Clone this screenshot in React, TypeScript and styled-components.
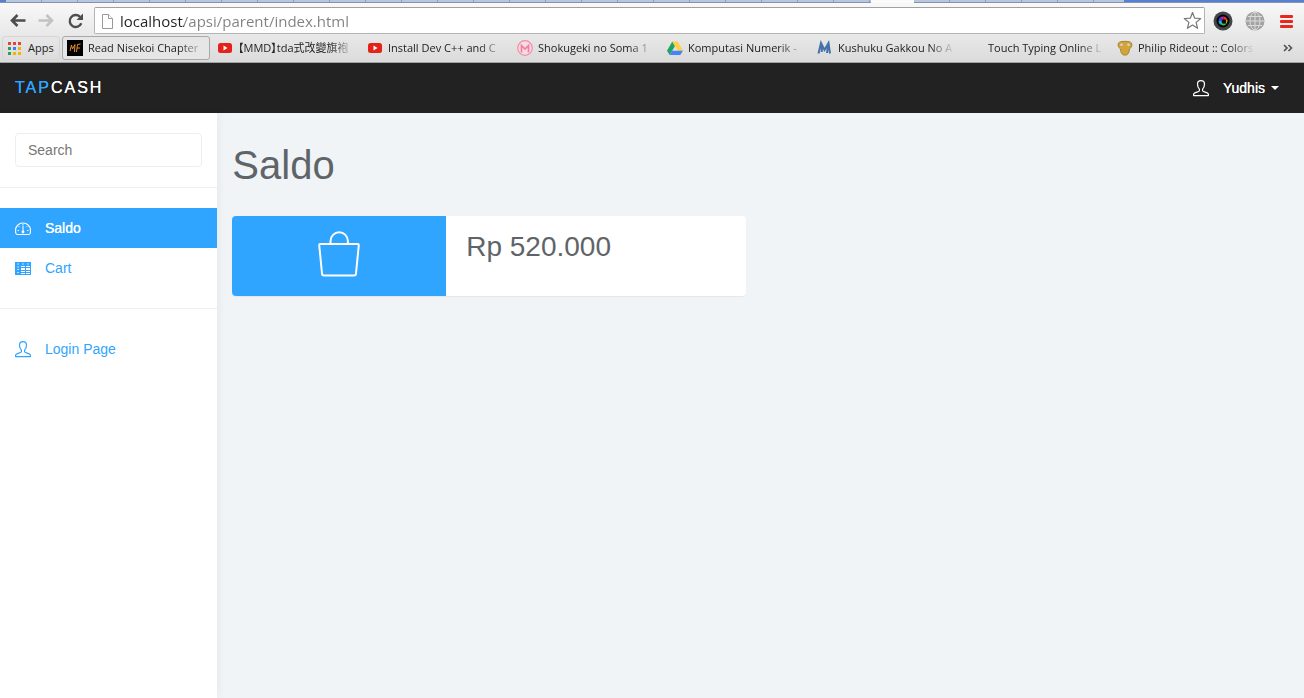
import React from "react";
import styled, { createGlobalStyle, css } from "styled-components";

const blue = "#30a5ff";
const sans = `"Liberation Sans", Arial, sans-serif`;
const chromeSans = `"Open Sans", "Noto Sans CJK TC", sans-serif`;

const GlobalStyle = createGlobalStyle`
  *, *::before, *::after { box-sizing: border-box; }
  body { margin: 0; background: #f1f4f7; color: #5f6468; font: 14px/20px ${sans}; }
  button, input { font: inherit; color: inherit; }
`;

const Page = styled.div`
  display: flex;
  flex-direction: column;
  min-height: 100vh;
`;

/* ---------- browser window ---------- */

const Chrome = styled.div`
  font: 12px/16px ${chromeSans};
  background: linear-gradient(#fafafa, #dcdcdc 60px);
  border-bottom: 1px solid #a3a3a3;
`;

const TabStrip = styled.div`
  display: flex;
  height: 3px;
  background: #5681d0;
  border-bottom: 1px solid #8593b3;
  padding-left: 6px;
`;

const TabGroup = styled.div<{ $span: number }>`
  flex: 0 1 ${(p) => p.$span}px;
  background: repeating-linear-gradient(90deg, #b9c7de 0 35px, #8e9ebb 35px 36px);
`;

const ActiveTab = styled.div`
  flex: 0 0 43px;
  height: 3px;
  background: #fafafa;
`;

const Toolbar = styled.div`
  display: flex;
  align-items: center;
  padding: 4px 7px 0 8px;
`;

const ToolButton = styled.button`
  display: grid;
  place-items: center;
  width: 20px;
  height: 20px;
  padding: 0;
  border: 0;
  background: none;
  flex: none;
  svg { display: block; }
`;

const NavButtons = styled.div`
  display: flex;
  gap: 9px;
  margin-right: 8px;
`;

const AddressBar = styled.form`
  display: flex;
  align-items: center;
  flex: 1;
  min-width: 0;
  height: 27px;
  padding: 0 2px 0 6px;
  background: #fff;
  border: 1px solid #b4b4b4;
  border-top-color: #a0a0a0;
  border-radius: 2px;
`;

const AddressInput = styled.input`
  flex: 1;
  min-width: 0;
  padding: 0;
  margin-left: 6px;
  border: 0;
  outline: 0;
  font-size: 15px;
  line-height: 24px;
  color: #808080;
  background: linear-gradient(90deg, #222 64px, #808080 64px);
  -webkit-background-clip: text;
  background-clip: text;
  -webkit-text-fill-color: transparent;
`;

const Extensions = styled.div`
  display: flex;
  gap: 12px;
  margin-left: 8px;
`;

const Bookmarks = styled.nav`
  display: flex;
  align-items: center;
  gap: 2px;
  height: 28px;
  padding: 0 6px 0 2px;
`;

const Bookmark = styled.a<{ $raised?: boolean; $faint?: boolean; $apps?: boolean }>`
  display: flex;
  align-items: center;
  gap: ${(p) => (p.$apps ? "6px" : "5px")};
  flex: 0 1 ${(p) => (p.$apps ? "58px" : "148px")};
  min-width: 0;
  height: 24px;
  padding: 0 4px;
  border: 1px solid transparent;
  border-radius: 3px;
  color: #222;
  text-decoration: none;
  svg { flex: none; }
  ${(p) => p.$faint && css`border-color: #d6d6d6;`}
  ${(p) => p.$raised && css`border-color: #a8a8a8; background: #e6e6e6;`}
`;

const BookmarkText = styled.span<{ $fade?: boolean }>`
  flex: 1;
  min-width: 0;
  overflow: hidden;
  white-space: nowrap;
  font-size: 11px;
  font-feature-settings: "palt";
  ${(p) =>
    p.$fade &&
    css`
      mask-image: linear-gradient(90deg, #000 calc(100% - 26px), transparent);
    `}
`;

const More = styled(ToolButton)`
  margin-left: auto;
`;

/* ---------- application ---------- */

const Header = styled.header`
  display: flex;
  align-items: center;
  justify-content: space-between;
  height: 50px;
  padding: 0 25px 0 15px;
  background: #222;
  color: #fff;
`;

const Brand = styled.a`
  font-size: 16px;
  letter-spacing: 2px;
  text-transform: uppercase;
  text-decoration: none;
  color: #fff;
  text-shadow: 0 0 0 currentColor;
  span { color: ${blue}; text-shadow: 0 0 0 currentColor; }
`;

const UserButton = styled.button`
  display: flex;
  align-items: center;
  padding: 0;
  border: 0;
  background: none;
  text-shadow: 0 0 0 #fff;
  svg { margin-right: 14px; }
`;

const Caret = styled.i`
  margin-left: 6px;
  border: 4px solid transparent;
  border-top-color: #fff;
  border-bottom: 0;
`;

const Body = styled.div`
  display: flex;
  flex: 1;
`;

const Sidebar = styled.aside`
  flex: none;
  width: calc(100% / 6);
  padding-top: 20px;
  background: #fff;
  box-shadow: 1px 0 10px rgba(0, 0, 0, 0.05);
`;

const SearchForm = styled.form`
  padding: 0 15px 20px;
  border-bottom: 1px solid #eee;
`;

const SearchInput = styled.input`
  display: block;
  width: 100%;
  height: 34px;
  padding: 6px 12px;
  border: 1px solid #eee;
  border-radius: 4px;
  background: #fff;
  &::placeholder { color: #777; opacity: 1; }
`;

const Menu = styled.ul`
  list-style: none;
  margin: 0;
  padding: 20px 0;
  & + & { border-top: 1px solid #eee; }
`;

const MenuLink = styled.a<{ $active?: boolean }>`
  display: flex;
  align-items: center;
  gap: 14px;
  height: 40px;
  padding: 0 15px;
  color: ${(p) => (p.$active ? "#fff" : blue)};
  background: ${(p) => (p.$active ? blue : "transparent")};
  text-shadow: ${(p) => (p.$active ? "0 0 0 #fff" : "none")};
  text-decoration: none;
`;

const Main = styled.main`
  flex: 1;
  min-width: 0;
  padding: 30px 15px;
`;

const Title = styled.h1`
  margin: 0 0 29px;
  font-size: 40px;
  line-height: 44px;
  font-weight: 400;
`;

const Cards = styled.section`
  display: grid;
  grid-template-columns: repeat(2, 1fr);
  gap: 30px;
`;

const Card = styled.article`
  display: grid;
  grid-template-columns: 5fr 7fr;
  min-height: 80px;
  border-radius: 4px;
  overflow: hidden;
  background: #fff;
  box-shadow: 0 1px 1px rgba(0, 0, 0, 0.05);
`;

const CardIcon = styled.div`
  display: flex;
  justify-content: center;
  align-items: flex-start;
  padding-top: 14px;
  background: ${blue};
`;

const Amount = styled.div`
  padding: 10px 20px;
  font-size: 28px;
  line-height: 42px;
`;

/* ---------- drawings ---------- */

const Arrow = ({ back }: { back?: boolean }) => (
  <svg width="18" height="16" viewBox="0 0 18 16" fill="none" stroke={back ? "#4d4d4d" : "#c2c2c2"} strokeWidth="2.600">
    {back ? <path d="M16.500 7.500H3M8.500 2 3 7.500l5.500 5.500" /> : <path d="M.500 7.500h13.500M8.500 2l5.500 5.500L8.500 13" />}
  </svg>
);

const Reload = () => (
  <svg width="18" height="18" viewBox="0 0 18 18">
    <path d="M14.300 11.300A6 6 0 1 1 13 4.800" fill="none" stroke="#4d4d4d" strokeWidth="2.400" />
    <path d="M16 1.500V8H9.500z" fill="#4d4d4d" />
  </svg>
);

const PageIcon = () => (
  <svg width="13" height="16" viewBox="0 0 13 16" fill="#fff" stroke="#999">
    <path d="M1.500 1.500h6l4 4v10h-10z" />
    <path d="M7.500 1.500v4h4" />
  </svg>
);

const Star = () => (
  <svg width="20" height="19" viewBox="0 0 20 19" fill="#fff" stroke="#777" strokeWidth="1.200" strokeLinejoin="round">
    <path d="m10.500 1.500 2.200 5.700 6 .300-4.600 3.900 1.500 5.900-5.100-3.300-5.100 3.300 1.500-5.900-4.600-3.900 6-.300z" />
  </svg>
);

const Lens = () => (
  <svg width="20" height="20" viewBox="0 0 20 20">
    <circle cx="10" cy="10" r="9.500" fill="#44464a" />
    <circle cx="10" cy="10" r="6.500" fill="#060608" />
    <path d="M10 10 7 6.500a5 5 0 0 1 4-1z" fill="#c21cc0" />
    <path d="m10 10 1-4.500a4.500 4.500 0 0 1 3.500 3.500z" fill="#f03a20" />
    <path d="m10 10 4.500-1a4.500 4.500 0 0 1-1.500 4z" fill="#e6d321" />
    <path d="m10 10 3 3.500a4.500 4.500 0 0 1-4.500.500z" fill="#35c73a" />
    <path d="m10 10-1.500 4A4.500 4.500 0 0 1 5.500 10z" fill="#18b7c6" />
    <path d="M10 10H5.500A4.500 4.500 0 0 1 7 6.500z" fill="#3848dd" />
    <circle cx="11" cy="10.500" r="2.300" fill="#0a0a10" />
  </svg>
);

const Globe = () => (
  <svg width="20" height="20" viewBox="0 0 20 20">
    <circle cx="10" cy="10" r="9.500" fill="#a3a3a3" />
    <path d="M10 1v18M1 10h18M3 5.500h14M3 14.500h14" fill="none" stroke="#dcdcdc" />
    <ellipse cx="10" cy="10" rx="5" ry="9" fill="none" stroke="#dcdcdc" />
  </svg>
);

const MenuBars = () => (
  <svg width="14" height="14" viewBox="0 0 14 14" fill="#e8281f">
    <rect y="1" width="13" height="3" rx="1" />
    <rect y="6" width="13" height="3" rx="1" />
    <rect y="11" width="13" height="3" rx="1" />
  </svg>
);

const AppsIcon = () => (
  <svg width="15" height="14" viewBox="0 0 15 14">
    <path d="M1 1h3v3H1zM6 1h3v3H6zM11 1h3v3h-3z" fill="#e8413a" />
    <path d="M1 6h3v3H1zM1 11h3v3H1z" fill="#2da05a" />
    <path d="M6 6h3v3H6z" fill="#3b82f0" />
    <path d="M11 6h3v3h-3zM6 11h3v3H6zM11 11h3v3h-3z" fill="#f5b400" />
  </svg>
);

const Favicon = ({ kind }: { kind: string }) => (
  <svg width="16" height="16" viewBox="0 0 16 16" fill="none">
    {kind === "mf" && (
      <>
        <path d="M0 0h16v16H0z" fill="#000" />
        <path d="m3 11 1.500-6L5.500 9 8 4.500 7.500 12M9.500 12l1-7.500L13.500 4M10 8h3" stroke="#e79423" />
      </>
    )}
    {kind === "video" && (
      <>
        <rect x="1" y="3" width="14" height="10" rx="2.500" fill="#e62117" />
        <path d="m6.500 5.500 4 2.500-4 2.500z" fill="#fff" />
      </>
    )}
    {kind === "mango" && (
      <>
        <circle cx="8" cy="8" r="7.300" fill="#f6dbe3" stroke="#f18daa" strokeWidth="1.200" />
        <path d="M4.500 12.500V5.500L8 9l3.500-3.500v7" stroke="#ee7f9f" strokeWidth="1.700" />
      </>
    )}
    {kind === "drive" && (
      <>
        <path d="M5.300 1.500 0 10.700l2.700 4.300L8 6z" fill="#1da462" />
        <path d="M5.300 1.500h5.400l5.300 9.200h-5.400z" fill="#ffcf48" />
        <path d="M5.200 10.700H16L13.300 15H2.700z" fill="#4385f5" />
      </>
    )}
    {kind === "mal" && (
      <path d="M1.500 13.500 4 3l3.500 7L11.500 3l1.500 10.500M4.800 5v7M11 5l-1 8" stroke="#4572a8" strokeWidth="2" />
    )}
    {kind === "gold" && (
      <>
        <path d="M1.500 3C3 .800 13 .800 14.500 3c1 2.500 0 4.500-2 6-.300 3-1 5-3 6h-3c-2-1-2.700-3-3-6-2-1.500-3-3.500-2-6z" fill="#cfa53c" stroke="#a9842f" />
        <circle cx="4.500" cy="4.700" r="1.300" fill="#d8d6cf" />
        <circle cx="11.500" cy="4.700" r="1.300" fill="#d8d6cf" />
      </>
    )}
  </svg>
);

const Chevrons = () => (
  <svg width="10" height="8" viewBox="0 0 10 8" fill="none" stroke="#505050" strokeWidth="1.600">
    <path d="m1 1 3 3-3 3M5.500 1l3 3-3 3" />
  </svg>
);

const Person = () => (
  <svg width="16" height="18" viewBox="0 0 16 18" fill="none" stroke="currentColor" strokeWidth="1.200" strokeLinejoin="round">
    <path d="M8 1.600c-2.200 0-3.500 1.300-3.500 3.400 0 2.400.8 4 1.900 5.200v1.600C6.400 13.200.6 13.200.6 15.300v1.300h14.800v-1.300c0-2.100-5.800-2.100-5.800-3.500v-1.600c1.100-1.200 1.900-2.800 1.900-5.200C11.500 2.900 10.200 1.600 8 1.600z" />
  </svg>
);

const Gauge = () => (
  <svg width="16" height="16" viewBox="0 0 16 16" fill="none" stroke="currentColor">
    <path d="M2 14.500c-1 0-1.500-1.500-1.500-4a7.500 7.500 0 0 1 15 0c0 2.500-.500 4-1.500 4z" strokeLinejoin="round" strokeWidth="1.200" />
    <path d="M8 4v1.500M3.700 6.200l1 1M12.300 6.200l-1 1M2.500 10.500H4M12 10.500h1.500M8 6v5" />
    <circle cx="8" cy="12" r="1.400" fill="currentColor" stroke="none" />
  </svg>
);

const TableIcon = () => (
  <svg width="16" height="16" viewBox="0 0 16 16">
    <path d="M0 2h16v13H0z" fill="currentColor" />
    <path d="M6 6h4v1H6zM11 6h4v1h-4zM6 8h4v2H6zM11 8h4v2h-4zM6 11h4v1H6zM11 11h4v1h-4zM6 13h4v1H6zM11 13h4v1h-4z" fill="#fff" />
    <path d="M2 4h2M7 4h2M12 4h2M2 7h2M2 9.500h2M2 12.500h2" stroke="#bfe2ff" />
  </svg>
);

const Bag = () => (
  <svg width="42" height="48" viewBox="0 0 42 48" fill="none" stroke="#fff" strokeWidth="2" strokeLinejoin="round">
    <path d="M2.200 14h37.600a1 1 0 0 1 1 1L38 43.500a2 2 0 0 1-2 2H6a2 2 0 0 1-2-2L1.200 15a1 1 0 0 1 1-1z" />
    <path d="M12.500 14v-3a8.700 8.700 0 0 1 17.400 0v3" />
  </svg>
);

const bookmarks = [
  { label: "Read Nisekoi Chapter", icon: "mf", raised: true },
  { label: "【MMD】tda式改變旗袍", icon: "video" },
  { label: "Install Dev C++ and C", icon: "video" },
  { label: "Shokugeki no Soma 1", icon: "mango" },
  { label: "Komputasi Numerik -", icon: "drive" },
  { label: "Kushuku Gakkou No A", icon: "mal" },
  { label: "Touch Typing Online L", icon: "none" },
  { label: "Philip Rideout :: Colors", icon: "gold" },
];

export default function App() {
  return (
    <Page>
      <GlobalStyle />
      <Chrome>
        <TabStrip>
          <TabGroup $span={865} />
          <ActiveTab />
          <TabGroup $span={210} />
        </TabStrip>
        <Toolbar>
          <NavButtons>
            <ToolButton aria-label="Back"><Arrow back /></ToolButton>
            <ToolButton aria-label="Forward"><Arrow /></ToolButton>
            <ToolButton aria-label="Reload"><Reload /></ToolButton>
          </NavButtons>
          <AddressBar>
            <PageIcon />
            <AddressInput aria-label="Address" defaultValue="localhost/apsi/parent/index.html" />
            <ToolButton type="button" aria-label="Bookmark this page"><Star /></ToolButton>
          </AddressBar>
          <Extensions>
            <ToolButton aria-label="Camera"><Lens /></ToolButton>
            <ToolButton aria-label="Network"><Globe /></ToolButton>
            <ToolButton aria-label="Menu"><MenuBars /></ToolButton>
          </Extensions>
        </Toolbar>
        <Bookmarks>
          <Bookmark href="#" $faint $apps>
            <AppsIcon />
            <BookmarkText>Apps</BookmarkText>
          </Bookmark>
          {bookmarks.map((b) => (
            <Bookmark href="#" key={b.label} $raised={b.raised}>
              <Favicon kind={b.icon} />
              <BookmarkText $fade>{b.label}</BookmarkText>
            </Bookmark>
          ))}
          <More aria-label="More bookmarks"><Chevrons /></More>
        </Bookmarks>
      </Chrome>

      <Header>
        <Brand href="#"><span>Tap</span>Cash</Brand>
        <UserButton>
          <Person />
          Yudhis
          <Caret />
        </UserButton>
      </Header>

      <Body>
        <Sidebar>
          <SearchForm role="search">
            <SearchInput type="text" aria-label="Search" placeholder="Search" />
          </SearchForm>
          <Menu>
            <li><MenuLink href="#" $active><Gauge />Saldo</MenuLink></li>
            <li><MenuLink href="#"><TableIcon />Cart</MenuLink></li>
          </Menu>
          <Menu>
            <li><MenuLink href="#"><Person />Login Page</MenuLink></li>
          </Menu>
        </Sidebar>
        <Main>
          <Title>Saldo</Title>
          <Cards>
            <Card>
              <CardIcon><Bag /></CardIcon>
              <Amount>Rp 520.000</Amount>
            </Card>
          </Cards>
        </Main>
      </Body>
    </Page>
  );
}
